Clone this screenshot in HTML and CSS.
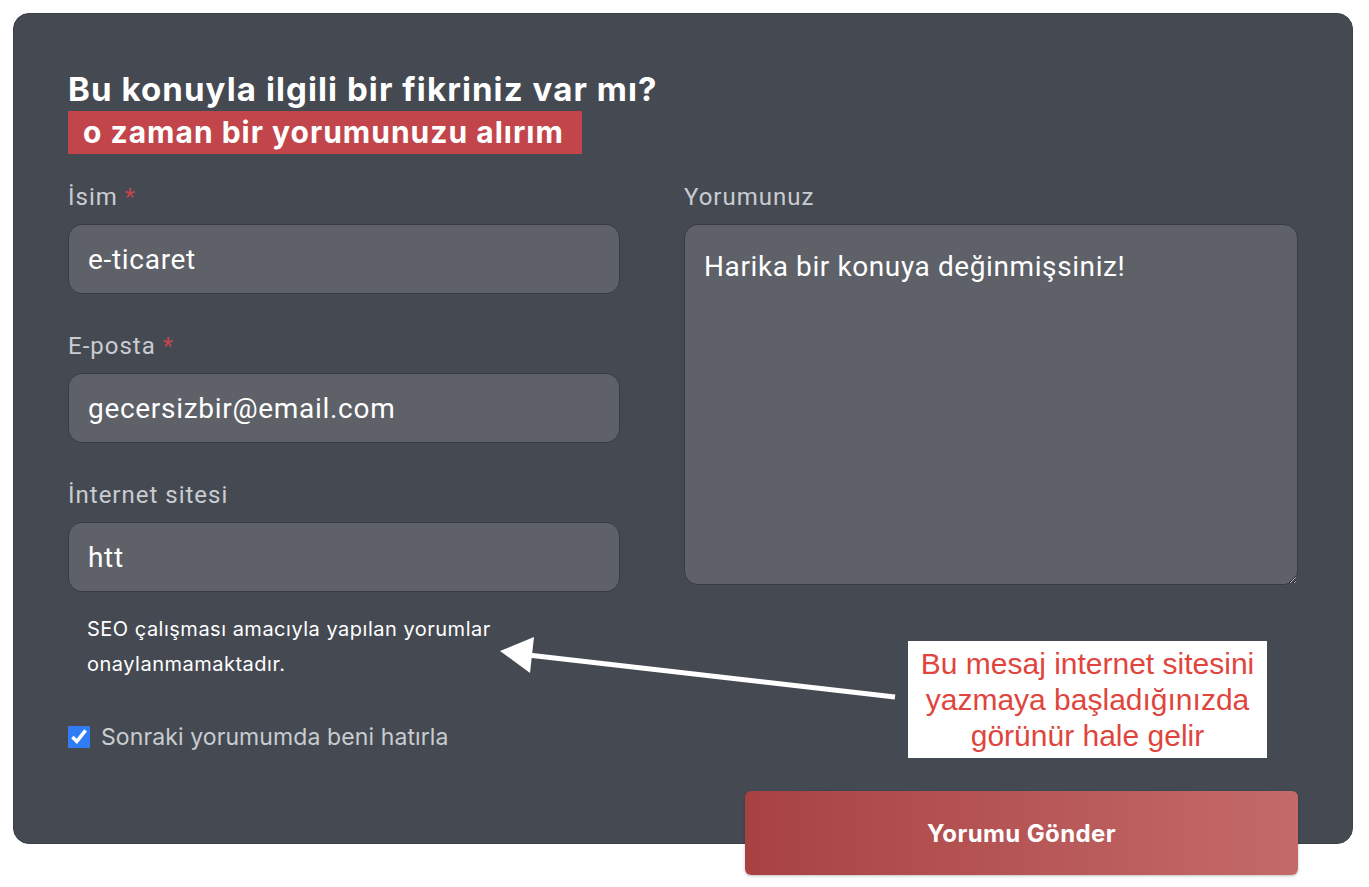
FILE: index.html
```html
<!DOCTYPE html>
<html lang="tr">
<head>
<meta charset="utf-8">
<title>Yorum</title>
<link rel="stylesheet" href="styles.css">
</head>
<body>
<section class="card">
  <h2 class="title">Bu konuyla ilgili bir fikriniz var mı?</h2>
  <div class="tag">o zaman bir yorumunuzu alırım</div>
  <form class="form">
    <div class="cols">
      <div class="col-left">
        <div class="field">
          <label class="label">İsim <span class="req">*</span></label>
          <input class="input" type="text" value="e-ticaret">
        </div>
        <div class="field">
          <label class="label">E-posta <span class="req">*</span></label>
          <input class="input" type="text" value="gecersizbir@email.com">
        </div>
        <div class="field last">
          <label class="label">İnternet sitesi</label>
          <input class="input" type="text" value="htt">
        </div>
        <p class="hint">SEO çalışması amacıyla yapılan yorumlar<br>onaylanmamaktadır.</p>
        <label class="remember"><input class="check" type="checkbox" checked><span>Sonraki yorumumda beni hatırla</span></label>
      </div>
      <div class="col-right">
        <div class="field">
          <label class="label">Yorumunuz</label>
          <textarea class="textarea">Harika bir konuya değinmişsiniz!</textarea>
        </div>
      </div>
    </div>
    <div class="actions">
      <button class="submit" type="button">Yorumu Gönder</button>
    </div>
  </form>
  <svg class="arrow" width="420" height="80" viewBox="0 0 420 80">
    <line x1="405" y1="67" x2="38" y2="25" stroke="#fff" stroke-width="5"/>
    <polygon points="10,21 44,7 40,43" fill="#fff"/>
  </svg>
  <div class="note">Bu mesaj internet sitesini<br>yazmaya başladığınızda<br>görünür hale gelir</div>
</section>
</body>
</html>
```

FILE: styles.css
```css
* { box-sizing: border-box; }
html, body { margin: 0; padding: 0; background: #ffffff; }
body { font-family: Inter, "Noto Sans", sans-serif; padding: 13px 16px 43px 13px; }

.card {
  position: relative;
  width: 1340px;
  background: #454a52;
  border: 1px solid #3c4047;
  border-radius: 16px;
  padding: 56px 54px 0 54px;
}

.title {
  margin: 0;
  font-size: 33px;
  line-height: 38px;
  font-weight: 700;
  color: #ffffff;
  letter-spacing: 1.1px;
}

.tag {
  display: inline-block;
  margin-top: 3px;
  background: #c2454b;
  color: #ffffff;
  font-size: 30px;
  font-weight: 700;
  line-height: 43px;
  height: 43px;
  padding: 0 18px 0 15px;
  letter-spacing: 1px;
}

.form { margin-top: 28px; }

.cols {
  display: grid;
  grid-template-columns: 552px 614px;
  column-gap: 64px;
}

.field { display: flex; flex-direction: column; margin-bottom: 37px; }
.field.last { margin-bottom: 0; }

.label {
  font-family: Roboto, "Noto Sans", sans-serif;
  font-size: 24px;
  line-height: 30px;
  letter-spacing: 1px;
  color: #c9ccd1;
  margin-bottom: 12px;
}
.req { color: #c4454b; }

.input {
  height: 70px;
  background: #5e6168;
  border: 1px solid #383c42;
  border-radius: 14px;
  padding: 0 19px;
  font-family: Roboto, "Noto Sans", sans-serif;
  font-size: 28px;
  letter-spacing: 0.7px;
  color: #ffffff;
  outline: none;
}

.textarea {
  height: 361px;
  background: #5e6168;
  border: 1px solid #383c42;
  border-radius: 14px;
  padding: 24px 19px;
  font-family: Roboto, "Noto Sans", sans-serif;
  font-size: 28px;
  line-height: 36px;
  letter-spacing: 0.6px;
  color: #ffffff;
  outline: none;
  resize: vertical;
  color-scheme: dark;
}

.hint {
  margin: 20px 0 0 19px;
  font-size: 20px;
  line-height: 35px;
  letter-spacing: 0.5px;
  color: #ffffff;
}

.remember {
  display: flex;
  align-items: center;
  gap: 11px;
  margin-top: 40px;
  height: 30px;
  font-size: 23px;
  letter-spacing: 0.1px;
  color: #c9ccd1;
}

.check {
  margin: 0;
  width: 22px;
  height: 22px;
  accent-color: #2f7cf6;
}

.actions {
  display: flex;
  justify-content: flex-end;
  margin-top: 39px;
  margin-bottom: -32px;
}

.submit {
  width: 553px;
  height: 84px;
  border: none;
  border-radius: 6px;
  background: linear-gradient(90deg, #a84242 0%, #b45252 40%, #c46a6a 100%);
  color: #ffffff;
  font-family: Inter, "Noto Sans", sans-serif;
  font-size: 24px;
  font-weight: 700;
  letter-spacing: 0.4px;
  box-shadow: 0 1px 3px rgba(0,0,0,0.25);
}

.arrow {
  position: absolute;
  left: 476px;
  top: 616px;
}

.note {
  position: absolute;
  left: 894px;
  top: 627px;
  width: 359px;
  height: 117px;
  background: #ffffff;
  color: #e0453d;
  font-family: "Liberation Sans", Arial, sans-serif;
  font-size: 30px;
  line-height: 36px;
  text-align: center;
  padding-top: 5px;
}
```
